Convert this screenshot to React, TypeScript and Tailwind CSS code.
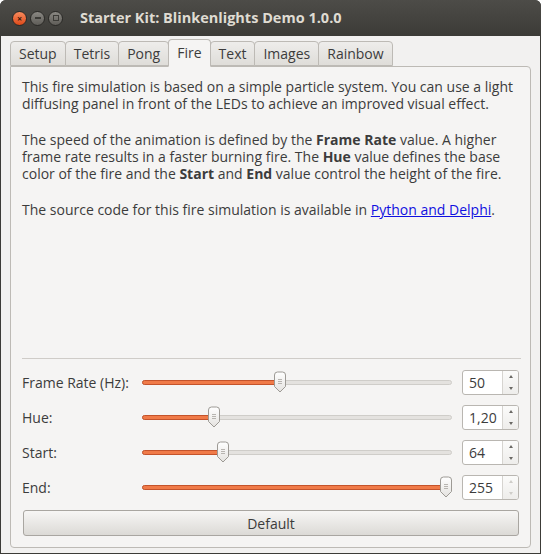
import { FC } from 'react';

const font = { fontFamily: '"Open Sans", "Noto Sans", sans-serif' };

const TitleButton: FC<{ kind: 'close' | 'min' | 'max' }> = ({ kind }) => {
    if (kind === 'close') {
        return (
            <div className="flex h-[15px] w-[15px] items-center justify-center rounded-full border border-[#2a2926] bg-gradient-to-b from-[#f78a5c] to-[#dd4814]">
                <span className="text-[9px] leading-none font-bold text-[#3a1a0c]">×</span>
            </div>
        );
    }
    return (
        <div className="flex h-[15px] w-[15px] items-center justify-center rounded-full border border-[#2a2926] bg-gradient-to-b from-[#8a8883] to-[#5f5d58]">
            {kind === 'min' ? (
                <div className="h-[2px] w-[6px] bg-[#3c3b37]" />
            ) : (
                <div className="h-[6px] w-[6px] border border-[#3c3b37]" />
            )}
        </div>
    );
};

const tabs = ['Setup', 'Tetris', 'Pong', 'Fire', 'Text', 'Images', 'Rainbow'];

const Tab: FC<{ label: string; active?: boolean }> = ({ label, active }) => (
    <div
        className={`-ml-px flex items-center rounded-t-[4px] border border-[#bdbab5] px-[8px] text-[14px] text-[#3c3c3c] ${
            active
                ? 'relative z-10 -mb-px h-[28px] border-b-[#f5f4f3] bg-[#f5f4f3] pb-[2px]'
                : 'h-[25px] bg-gradient-to-b from-[#eeedeb] to-[#dfddd9]'
        }`}
    >
        {label}
    </div>
);

const Handle = () => (
    <svg width="14" height="22" viewBox="0 0 14 22" className="absolute top-[-9px]">
        <defs>
            <linearGradient id="hg" x1="0" y1="0" x2="0" y2="1">
                <stop offset="0" stopColor="#ffffff" />
                <stop offset="1" stopColor="#e4e2df" />
            </linearGradient>
        </defs>
        <path d="M1.5 4 Q1.5 1 4.5 1 H9.5 Q12.5 1 12.5 4 V15.5 L7 21 L1.5 15.5 Z" fill="url(#hg)" stroke="#9d9a95" />
        <path d="M5 8.5 H9 M5 10.5 H9 M5 12.5 H9" stroke="#a8a5a0" strokeWidth="0.8" />
    </svg>
);

const Slider: FC<{ pos: number }> = ({ pos }) => (
    <div className="relative h-[5px] w-[310px]">
        <div className="absolute inset-0 rounded-full border border-[#cfcdc9] bg-[#e4e2df]" />
        <div
            className="absolute top-0 left-0 h-[5px] rounded-full border border-[#c4532b] bg-[#f07a48]"
            style={{ width: pos + 4 }}
        />
        <div className="absolute" style={{ left: pos - 7 }}>
            <Handle />
        </div>
    </div>
);

const Spin: FC<{ value: string; atMax?: boolean }> = ({ value, atMax }) => (
    <div className="flex h-[25px] w-[57px] overflow-hidden rounded-[3px] border border-[#b9b6b1] bg-white">
        <div className="flex flex-1 items-center pl-[6px] text-[14px] text-[#3c3c3c]">{value}</div>
        <div className="flex w-[16px] flex-col items-center justify-between border-l border-[#d6d4d0] bg-gradient-to-b from-[#fbfbfa] to-[#eeedeb] py-[4px]">
            <div
                className={`h-0 w-0 border-x-[2px] border-b-[3px] border-x-transparent ${
                    atMax ? 'border-b-[#cfcdc9]' : 'border-b-[#6a6864]'
                }`}
            />
            <div
                className={`h-0 w-0 border-x-[2px] border-t-[3px] border-x-transparent ${
                    atMax ? 'border-t-[#cfcdc9]' : 'border-t-[#6a6864]'
                }`}
            />
        </div>
    </div>
);

const rows = [
    { label: 'Frame Rate (Hz):', pos: 138, value: '50' },
    { label: 'Hue:', pos: 72, value: '1,20' },
    { label: 'Start:', pos: 81, value: '64' },
    { label: 'End:', pos: 304, value: '255', atMax: true },
];

export default function App() {
    return (
        <div className="flex h-[554px] w-[541px] flex-col overflow-hidden rounded-t-[6px] bg-[#3c3b37]" style={font}>
            <header className="flex h-[36px] shrink-0 items-center bg-gradient-to-b from-[#4d4c48] to-[#3c3b37] pl-[12px]">
                <div className="flex gap-[3px]">
                    <TitleButton kind="close" />
                    <TitleButton kind="min" />
                    <TitleButton kind="max" />
                </div>
                <span className="ml-[17px] text-[14.5px] font-bold text-[#dfdbd2]">Starter Kit: Blinkenlights Demo 1.0.0</span>
            </header>
            <main className="mx-px mb-px flex flex-1 flex-col bg-[#f2f1f0] px-[9px] pb-[5px]">
                <div className="flex h-[30px] items-end pl-px">
                    {tabs.map((t) => (
                        <Tab key={t} label={t} active={t === 'Fire'} />
                    ))}
                </div>
                <section className="flex flex-1 flex-col rounded-[4px] rounded-tl-none border border-[#bdbab5] bg-[#f5f4f3] px-[11px] pt-[11px] pb-[11px] text-[14px] leading-[17px] text-[#3c3c3c]">
                    <p>
                        This fire simulation is based on a simple particle system. You can use a light diffusing panel in front
                        of the LEDs to achieve an improved visual effect.
                    </p>
                    <p className="mt-[19px]">
                        The speed of the animation is defined by the <b>Frame Rate</b> value. A higher frame rate results in a
                        faster burning fire. The <b>Hue</b> value defines the base color of the fire and the <b>Start</b> and{' '}
                        <b>End</b> value control the height of the fire.
                    </p>
                    <p className="mt-[19px]">
                        The source code for this fire simulation is available in{' '}
                        <a className="text-[#1010e0] underline">Python and Delphi</a>.
                    </p>
                    <div className="flex-1" />
                    <div className="mr-[-2px] h-px bg-[#cfccc8]" />
                    <div className="mt-[11px] flex flex-col gap-[10px]">
                        {rows.map((r) => (
                            <div key={r.label} className="flex h-[25px] items-center">
                                <span className="w-[120px]">{r.label}</span>
                                <Slider pos={r.pos} />
                                <div className="ml-[10px]">
                                    <Spin value={r.value} atMax={r.atMax} />
                                </div>
                            </div>
                        ))}
                    </div>
                    <button className="mt-[10px] ml-px h-[26px] rounded-[3px] border border-[#a9a6a1] bg-gradient-to-b from-[#f7f6f5] to-[#dcdad6] text-[14px] text-[#3c3c3c]">
                        Default
                    </button>
                </section>
            </main>
        </div>
    );
}
